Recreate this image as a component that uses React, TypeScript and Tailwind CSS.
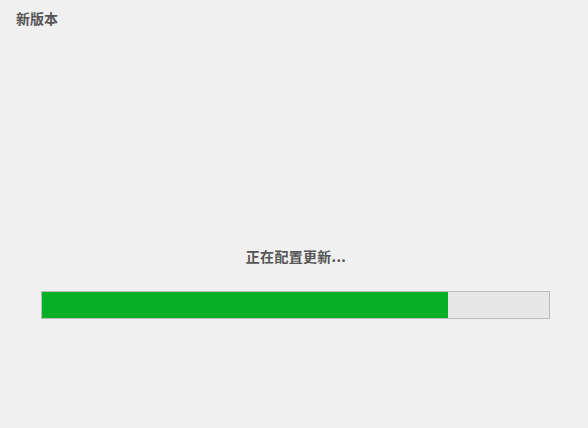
import React from 'react';

const App: React.FC = () => {
    const progress = 80;

    return (
        <div className="h-[428px] w-[588px] bg-[#f0f0f0] flex flex-col font-['Noto_Sans_CJK_SC',sans-serif] text-[#555555]">
            {/* Window title */}
            <div className="pt-2 pl-4 h-7 text-[14px] leading-5 font-bold">新版本</div>

            {/* Status */}
            <div className="mt-[218px] h-5 pl-1 text-center text-[14px] leading-5 font-bold tracking-[0.3px]">正在配置更新...</div>

            {/* Progress bar */}
            <div className="mt-[25px] ml-[41px] mr-[38px] h-[28px] border border-[#bcbcbc] bg-[#e6e6e6]">
                <div className="h-full bg-[#06b025]" style={{ width: `${progress}%` }} />
            </div>
        </div>
    );
};

export default App;
